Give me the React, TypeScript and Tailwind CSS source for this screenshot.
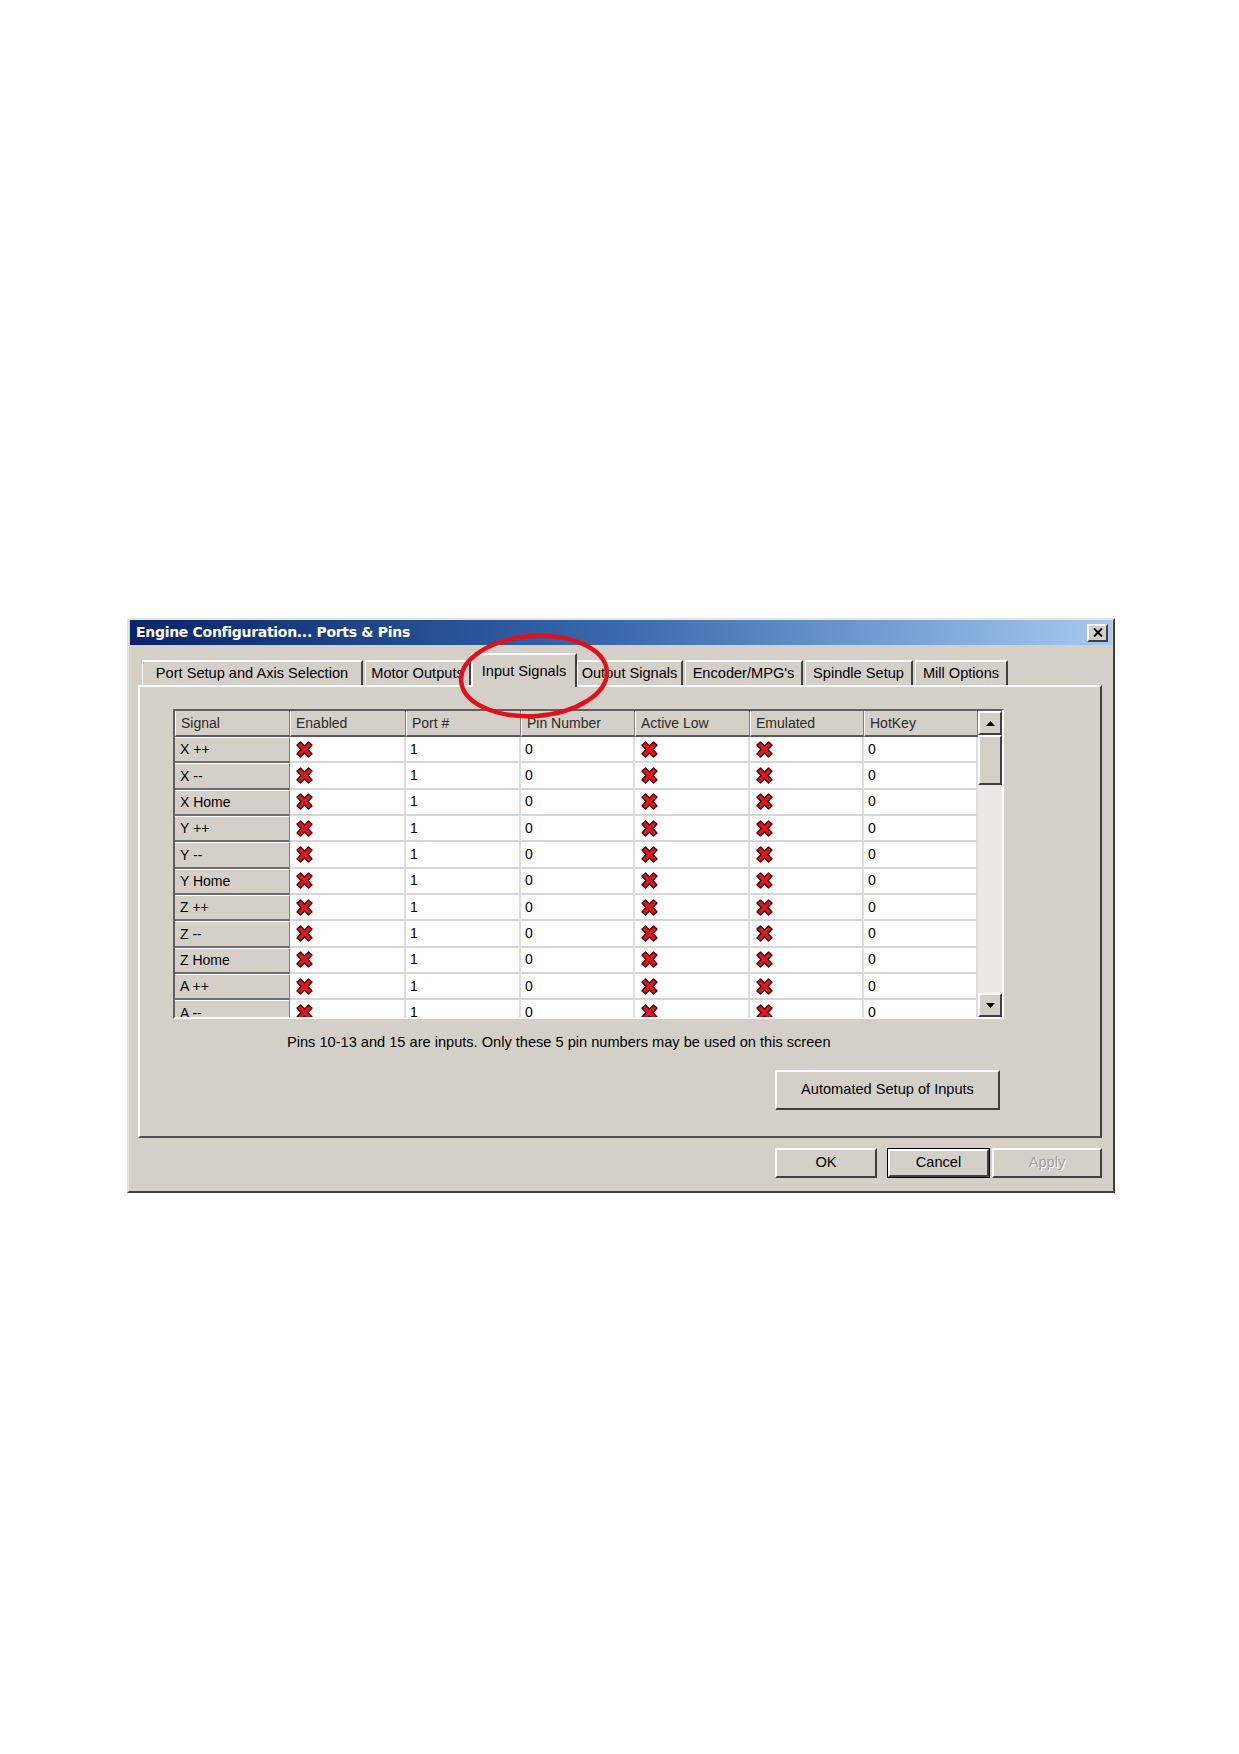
const signals = ['X ++', 'X --', 'X Home', 'Y ++', 'Y --', 'Y Home', 'Z ++', 'Z --', 'Z Home', 'A ++', 'A --']
const headers = ['Signal', 'Enabled', 'Port #', 'Pin Number', 'Active Low', 'Emulated', 'HotKey']

const tabs = [
  { label: 'Port Setup and Axis Selection', w: 'w-[221px]', ml: 'ml-0' },
  { label: 'Motor Outputs', w: 'w-[106px]', ml: 'ml-[2px]' },
  { label: 'Input Signals', w: 'w-[106px]', ml: 'ml-0', active: true },
  { label: 'Output Signals', w: 'w-[106px]', ml: 'ml-0' },
  { label: "Encoder/MPG's", w: 'w-[118px]', ml: 'ml-[2px]' },
  { label: 'Spindle Setup', w: 'w-[108px]', ml: 'ml-[2px]' },
  { label: 'Mill Options', w: 'w-[93px]', ml: 'ml-[2px]' },
]

// chunky red cross used for unchecked flags
function RedX() {
  return (
    <svg width="17" height="17" viewBox="0 0 17 17">
      <polygon
        points="1,4 4.5,1 8.5,5 12.5,1 16,4 12,8.5 16,13 12.5,16 8.5,12 4.5,16 1,13 5,8.5"
        fill="#dc1820"
        stroke="#4a0606"
        strokeWidth="1.4"
        strokeLinejoin="round"
      />
    </svg>
  )
}

function XCell() {
  return (
    <div className="h-[26.35px] bg-white border-r-2 border-r-[#dedede] border-b-2 border-b-[#d6d6d6] flex items-center pl-[6px]">
      <RedX />
    </div>
  )
}

function TextCell({ value }: { value: string }) {
  return (
    <div className="h-[26.35px] bg-white border-r-2 border-r-[#dedede] border-b-2 border-b-[#d6d6d6] flex items-center pl-[4px] text-[14px]">
      {value}
    </div>
  )
}

function Win2kButton({ label, w, isDefault, disabled }: { label: string; w: string; isDefault?: boolean; disabled?: boolean }) {
  return (
    <div className={`${w} h-[30px] ${isDefault ? 'border border-black' : ''}`}>
      <div className="h-full border-2 border-t-white border-l-white border-r-[#404040] border-b-[#404040] bg-[#d4d0c8] flex items-center justify-center text-[14.6px]">
        <span className={disabled ? 'text-[#a0a0a0] [text-shadow:1px_1px_0_#fff]' : 'text-black'}>{label}</span>
      </div>
    </div>
  )
}

export default function App() {
  return (
    <div className="w-[1239px] h-[1754px] bg-white pt-[618px] pl-[127px] font-['Liberation_Sans',Arial,sans-serif] text-black">
      <div className="relative w-[988px] h-[575px] bg-[#d4d0c8] border-2 border-t-[#e8e6e0] border-l-[#e8e6e0] border-r-[#404040] border-b-[#404040] flex flex-col">
        {/* title bar */}
        <div className="h-[25px] mx-[1px] bg-linear-to-r from-[#0a246a] via-[#3a6aae] to-[#a6caf0] flex items-center justify-between pl-[6px] pr-[4px]">
          <span className="text-white font-bold text-[14px] font-['DejaVu_Sans',sans-serif] tracking-[-0.3px]">Engine Configuration... Ports &amp; Pins</span>
          <div className="w-[21px] h-[18px] bg-[#d4d0c8] border-2 border-t-white border-l-white border-r-[#404040] border-b-[#404040] flex items-center justify-center">
            <svg width="10" height="9" viewBox="0 0 10 9">
              <path d="M1 0.5 L9 8.5 M9 0.5 L1 8.5" stroke="#000" strokeWidth="2" />
            </svg>
          </div>
        </div>

        {/* tab strip */}
        <div className="h-[40px] pl-[13px] flex items-end relative z-10">
          {tabs.map((t) =>
            t.active ? (
              <div
                key={t.label}
                className={`${t.w} ${t.ml} h-[34px] -mb-[2px] bg-[#d4d0c8] border-t-2 border-l-2 border-r-2 border-t-white border-l-white border-r-[#404040] flex items-start justify-center pt-[6px] text-[14.6px]`}
              >
                {t.label}
              </div>
            ) : (
              <div
                key={t.label}
                className={`${t.w} ${t.ml} h-[25px] bg-[#d4d0c8] border-t-2 border-l border-r-2 border-t-white border-l-white border-r-[#404040] flex items-center justify-center text-[14.6px]`}
              >
                {t.label}
              </div>
            )
          )}
        </div>

        {/* tab page */}
        <div className="ml-[9px] w-[964px] h-[453px] border-2 border-t-white border-l-white border-r-[#404040] border-b-[#505050] pl-[33px] pt-[22px]">
          <div className="w-[831px] h-[310px] border-2 border-t-[#606060] border-l-[#606060] border-r-white border-b-white flex overflow-hidden">
            <div className="grid grid-cols-[115px_116px_115px_114px_115px_114px_114px] content-start h-[306px] overflow-hidden">
              {headers.map((h) => (
                <div
                  key={h}
                  className="h-[26px] bg-[#d4d0c8] border-l border-l-white border-r border-r-[#808080] border-b-2 border-b-[#5a5a5a] flex items-center pl-[5px] text-[14px] text-[#2a2a2a]"
                >
                  {h}
                </div>
              ))}
              {signals.map((s) => (
                <div key={s} className="contents">
                  <div className="h-[26.35px] bg-[#d4d0c8] border-t border-t-white border-r border-r-[#808080] border-b-2 border-b-[#6e6e6e] flex items-center pl-[5px] text-[14px]">
                    {s}
                  </div>
                  <XCell />
                  <TextCell value="1" />
                  <TextCell value="0" />
                  <XCell />
                  <XCell />
                  <TextCell value="0" />
                </div>
              ))}
            </div>

            {/* vertical scrollbar */}
            <div className="w-[24px] h-[306px] bg-[#ebe9e3] flex flex-col">
              <div className="h-[24px] bg-[#d4d0c8] border-2 border-t-white border-l-white border-r-[#404040] border-b-[#404040] flex items-center justify-center">
                <svg width="9" height="5" viewBox="0 0 9 5">
                  <path d="M4.5 0 L9 5 L0 5 Z" fill="#000" />
                </svg>
              </div>
              <div className="h-[50px] bg-[#d4d0c8] border-2 border-t-white border-l-white border-r-[#404040] border-b-[#404040]" />
              <div className="flex-1" />
              <div className="h-[24px] bg-[#d4d0c8] border-2 border-t-white border-l-white border-r-[#404040] border-b-[#404040] flex items-center justify-center">
                <svg width="9" height="5" viewBox="0 0 9 5">
                  <path d="M0 0 L9 0 L4.5 5 Z" fill="#000" />
                </svg>
              </div>
            </div>
          </div>

          <p className="mt-[15px] ml-[114px] text-[14.6px] leading-[16px]">
            Pins 10-13 and 15 are inputs. Only these 5 pin numbers may be used on this screen
          </p>

          <div className="mt-[20px] ml-[602px]">
            <Win2kButton label="Automated Setup of Inputs" w="w-[225px] h-[40px]!" />
          </div>
        </div>

        {/* dialog buttons */}
        <div className="mt-[10px] pr-[11px] flex justify-end">
          <Win2kButton label="OK" w="w-[102px]" />
          <div className="w-[10px]" />
          <Win2kButton label="Cancel" w="w-[103px]" isDefault />
          <div className="w-[2px]" />
          <Win2kButton label="Apply" w="w-[110px]" disabled />
        </div>

        {/* red annotation ring around the active tab */}
        <svg className="absolute left-[328px] top-[12px] z-20 pointer-events-none" width="154" height="88" viewBox="0 0 154 88">
          <ellipse cx="77" cy="44" rx="73" ry="40" fill="none" stroke="#e3101a" strokeWidth="4.5" transform="rotate(-4 77 44)" />
        </svg>
      </div>
    </div>
  )
}
